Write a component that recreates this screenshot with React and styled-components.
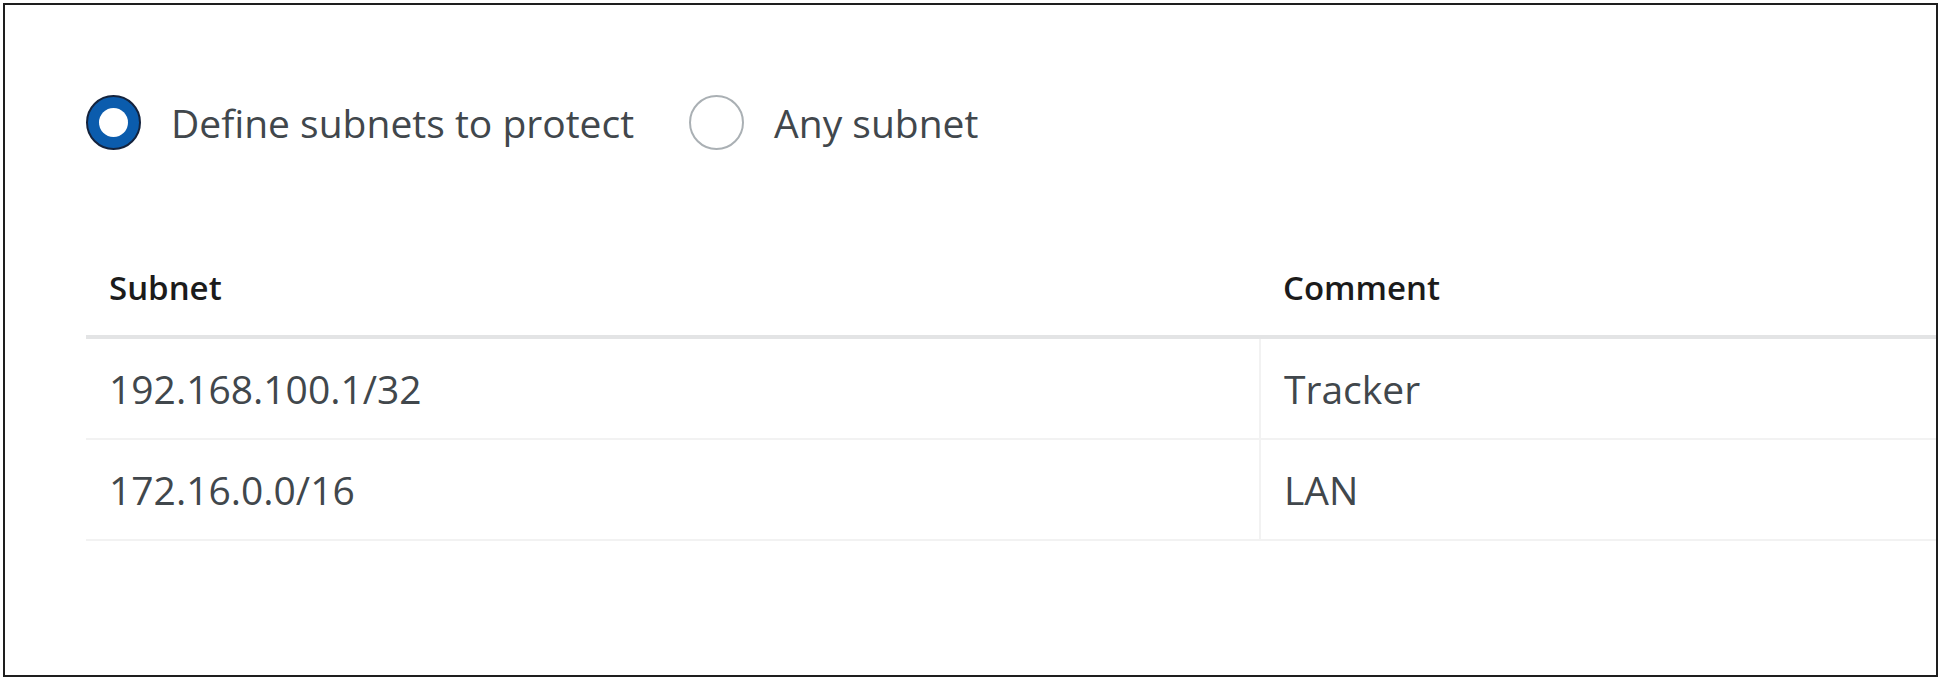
import styled, { createGlobalStyle } from "styled-components";

const GlobalStyle = createGlobalStyle`
  html, body {
    margin: 0;
    padding: 0;
    background: #ffffff;
  }
  body {
    font-family: "Open Sans", "Noto Sans", sans-serif;
  }
`;

const Frame = styled.div`
  box-sizing: border-box;
  margin: 3px 3px 0 3px;
  height: 674px;
  border: 2px solid #1e1e1e;
  padding: 90px 0 0 81px;
  background: #fff;
`;

const RadioGroup = styled.div`
  display: flex;
  align-items: center;
  height: 55px;
`;

const RadioOption = styled.label`
  display: flex;
  align-items: center;
  gap: 30px;
  margin-right: 55px;
  cursor: pointer;
`;

const RadioCircle = styled.span`
  box-sizing: border-box;
  width: 55px;
  height: 55px;
  border-radius: 50%;
  display: flex;
  align-items: center;
  justify-content: center;
  flex-shrink: 0;
  background: ${(p) => (p.checked ? "#0b5cad" : "#fff")};
  border: ${(p) => (p.checked ? "2px solid #14233d" : "2px solid #aab0b4")};

  &::after {
    content: "";
    width: 29px;
    height: 29px;
    border-radius: 50%;
    background: #fff;
    display: ${(p) => (p.checked ? "block" : "none")};
  }
`;

const RadioLabel = styled.span`
  font-size: 39px;
  color: #41474c;
  line-height: 1;
  white-space: nowrap;
`;

const Table = styled.table`
  margin-top: 90px;
  width: 100%;
  border-collapse: collapse;
  table-layout: fixed;
`;

const HeadCell = styled.th`
  height: 95px;
  padding: 0 0 0 23px;
  text-align: left;
  font-size: 33px;
  font-weight: 600;
  color: #1b1b1b;
  border-bottom: 4px solid #e3e4e5;
`;

const Row = styled.tr`
  border-bottom: 2px solid #f2f2f2;
`;

const Cell = styled.td`
  height: 99px;
  padding: 0 0 0 23px;
  font-size: 39px;
  color: #41474c;
  white-space: nowrap;
  border-left: ${(p) => (p.divided ? "2px solid #f2f2f2" : "none")};
`;

const subnets = [
  { subnet: "192.168.100.1/32", comment: "Tracker" },
  { subnet: "172.16.0.0/16", comment: "LAN" },
];

const App = () => {
  return (
    <>
      <GlobalStyle />
      <Frame>
        <RadioGroup>
          <RadioOption>
            <RadioCircle checked />
            <RadioLabel>Define subnets to protect</RadioLabel>
          </RadioOption>
          <RadioOption>
            <RadioCircle />
            <RadioLabel>Any subnet</RadioLabel>
          </RadioOption>
        </RadioGroup>

        <Table>
          <colgroup>
            <col style={{ width: "1174px" }} />
            <col />
          </colgroup>
          <thead>
            <tr>
              <HeadCell>Subnet</HeadCell>
              <HeadCell>Comment</HeadCell>
            </tr>
          </thead>
          <tbody>
            {subnets.map((item) => (
              <Row key={item.subnet}>
                <Cell>{item.subnet}</Cell>
                <Cell divided>{item.comment}</Cell>
              </Row>
            ))}
          </tbody>
        </Table>
      </Frame>
    </>
  );
};

export default App;
